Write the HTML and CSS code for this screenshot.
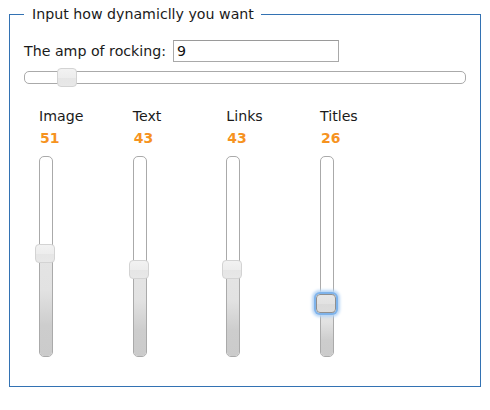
FILE: index.html
```html
<!DOCTYPE html>
<html>
<head>
<meta charset="utf-8">
<link rel="stylesheet" href="styles.css">
</head>
<body>
<fieldset class="panel">
  <legend class="panel-title">Input how dynamiclly you want</legend>
  <div class="amp-row">
    <label class="amp-label" for="amp">The amp of rocking:</label>
    <input class="amp-input" id="amp" type="text" value="9">
  </div>
  <div class="hslider">
    <span class="handle hhandle" style="left:9%"></span>
  </div>
  <div class="columns">
    <div class="col">
      <div class="col-name">Image</div>
      <div class="col-val">51</div>
      <div class="vslider">
        <div class="vrange" style="height:51%"></div>
        <span class="handle vhandle" style="bottom:51%"></span>
      </div>
    </div>
    <div class="col">
      <div class="col-name">Text</div>
      <div class="col-val">43</div>
      <div class="vslider">
        <div class="vrange" style="height:43%"></div>
        <span class="handle vhandle" style="bottom:43%"></span>
      </div>
    </div>
    <div class="col">
      <div class="col-name">Links</div>
      <div class="col-val">43</div>
      <div class="vslider">
        <div class="vrange" style="height:43%"></div>
        <span class="handle vhandle" style="bottom:43%"></span>
      </div>
    </div>
    <div class="col">
      <div class="col-name">Titles</div>
      <div class="col-val">26</div>
      <div class="vslider">
        <div class="vrange" style="height:26%"></div>
        <span class="handle vhandle focused" style="bottom:26%"></span>
      </div>
    </div>
  </div>
</fieldset>
</body>
</html>
```
FILE: styles.css
```css
html, body {
  margin: 0;
  padding: 0;
  background: #ffffff;
}
body {
  font-family: "DejaVu Sans", Verdana, sans-serif;
  font-size: 14.2px;
  color: #1a1a1a;
  padding-top: 6px;
}
.panel {
  box-sizing: border-box;
  width: 472px;
  margin: 0 0 0 9px;
  padding: 0 14px 29px 14px;
  border: 1px solid #3372b3;
}
.panel-title {
  padding: 0 7px 0 8px;
  line-height: 16px;
  font-size: 14.2px;
}
.amp-row {
  display: flex;
  align-items: center;
  gap: 7px;
  margin-top: 18px;
  height: 22px;
}
.amp-label {
  line-height: 16px;
}
.amp-input {
  box-sizing: border-box;
  width: 166px;
  height: 22px;
  margin: 0;
  padding: 0 3px;
  border: 1px solid #a9a9a9;
  border-top-color: #9a9a9a;
  font-family: "DejaVu Sans", Verdana, sans-serif;
  font-size: 14.2px;
  color: #111;
  outline: none;
}
.hslider {
  position: relative;
  box-sizing: border-box;
  height: 13px;
  margin-top: 9px;
  border: 1px solid #aaaaaa;
  border-radius: 5px;
  background: #ffffff;
}
.handle {
  position: absolute;
  box-sizing: border-box;
  width: 20px;
  height: 19px;
  border: 1px solid #d3d3d3;
  border-radius: 4px;
  background: linear-gradient(#f2f2f2 0%, #ededed 50%, #e5e5e5 50%, #e8e8e8 100%);
}
.hhandle {
  top: -4px;
  margin-left: -7.5px;
}
.columns {
  display: grid;
  grid-template-columns: repeat(4, 93.67px);
  margin-top: 24px;
  padding-left: 15px;
}
.col {
  display: flex;
  flex-direction: column;
  align-items: flex-start;
}
.col-name {
  line-height: 16px;
}
.col-val {
  margin-top: 6px;
  padding-left: 1px;
  line-height: 16px;
  font-size: 14px;
  font-weight: bold;
  color: #f6931f;
}
.vslider {
  position: relative;
  box-sizing: border-box;
  width: 14px;
  height: 201px;
  margin-top: 10px;
  border: 1px solid #aaaaaa;
  border-radius: 5px;
  background: #ffffff;
}
.vrange {
  position: absolute;
  left: 0;
  right: 0;
  bottom: 0;
  border-radius: 0 0 4px 4px;
  background: linear-gradient(#e4e4e4 0%, #e2e2e2 35%, #cdcdcd 70%, #cbcbcb 100%);
}
.vhandle {
  left: -5px;
  margin-bottom: -8.5px;
}
.vhandle.focused {
  border-color: #8f8f8f;
  background: linear-gradient(#e6e6e6 0%, #e2e2e2 50%, #dadada 50%, #dcdcdc 100%);
  box-shadow: 0 0 0 2px #7fb3ea, 0 0 3px 4px #b8d6f6;
}
```
